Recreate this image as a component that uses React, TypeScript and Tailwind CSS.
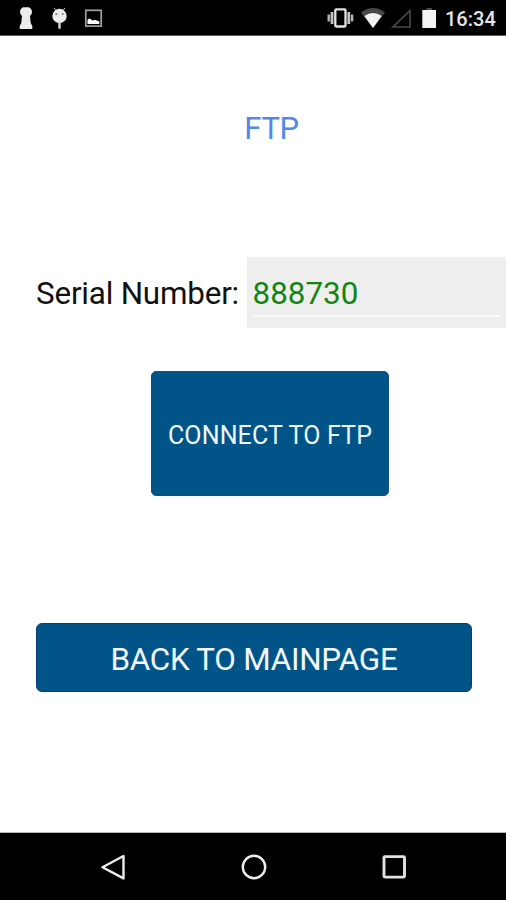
function StatusIconsLeft() {
  return (
    <svg width="120" height="35" viewBox="0 0 120 35" className="block">
      <path d="M23 7.300h6q3 1.700 3 5 0 2.200-2 3.700l.7 7 1.600 3V29H19.700v-3l1.600-3 .7-7q-2-1.500-2-3.700 0-3.300 3-5z" fill="#ececec" />
      <path d="M54 8l2.500 3M65 8l-2.500 3" stroke="#ccc" strokeWidth="1" />
      <circle cx="59.500" cy="16" r="7.200" fill="#ececec" />
      <path d="M58.300 22h2.400v6.200q-1.200 1.600-2.400 0z" fill="#d8d8d8" />
      <circle cx="56.300" cy="14" r="1" fill="#777" />
      <circle cx="62.700" cy="14" r="1" fill="#777" />
      <rect x="85.800" y="10.300" width="15.400" height="15.800" fill="none" stroke="#a0a0a0" strokeWidth="1.700" />
      <path d="M87.500 24v-4.200l2-1.300 3 2 2.500-.8 4.300 1.800V24z" fill="#fff" />
    </svg>
  );
}

function StatusIconsRight() {
  return (
    <svg width="130" height="35" viewBox="310 0 130 35" className="block">
      <rect x="335.300" y="9.300" width="10.200" height="17.200" rx="1" fill="none" stroke="#e2e2e2" strokeWidth="2.300" />
      <path d="M332 12v12M348.800 12v12" stroke="#c4c4c4" strokeWidth="2.800" />
      <path d="M328.700 14.500v7M352.100 14.500v7" stroke="#b5b5b5" strokeWidth="2.400" />
      <path d="M361 12.500q12-8.800 24 0L373 28z" fill="#484848" />
      <path d="M364.300 16q8.700-6 17.400 0L373 28z" fill="#f2f2f2" />
      <path d="M410 10.500V27h-17z" fill="none" stroke="#474747" strokeWidth="1.700" />
      <path d="M426.500 8h5.500v3h-5.500z" fill="#484848" />
      <rect x="422.300" y="10" width="13.700" height="18" fill="#f4f4f4" />
    </svg>
  );
}

function StatusBar() {
  return (
    <header className="flex h-[36px] shrink-0 items-start border-b border-[#5c5c5c] bg-black">
      <StatusIconsLeft />
      <div className="ml-auto flex">
        <StatusIconsRight />
        <span className="w-[66px] pl-[5px] pt-[1px] text-[20px] font-medium leading-[36px] text-[#e4e4e4]">16:34</span>
      </div>
    </header>
  );
}

function NavigationBar() {
  return (
    <nav className="flex h-[68px] shrink-0 items-center justify-between border-t border-[#b5b5b5] bg-black pl-[100px] pr-[99px]">
      <button type="button" aria-label="Back">
        <svg width="26" height="28" viewBox="0 0 26 28" className="block">
          <path d="M23.500 3v22.400L2.500 14.200z" fill="none" stroke="#ededed" strokeWidth="2.400" strokeLinejoin="round" />
        </svg>
      </button>
      <button type="button" aria-label="Home">
        <svg width="26" height="28" viewBox="0 0 26 28" className="block">
          <circle cx="13" cy="14" r="11.200" fill="none" stroke="#ededed" strokeWidth="2.400" />
        </svg>
      </button>
      <button type="button" aria-label="Recent apps">
        <svg width="26" height="28" viewBox="0 0 26 28" className="block">
          <rect x="3" y="3.600" width="20.500" height="20.500" rx="1" fill="none" stroke="#e2e2e2" strokeWidth="2.900" />
        </svg>
      </button>
    </nav>
  );
}

export default function App() {
  return (
    <div className="flex h-[900px] w-[506px] flex-col overflow-hidden bg-white font-['Roboto',sans-serif]">
      <StatusBar />
      <main className="flex grow flex-col">
        <h1 className="mt-[73px] h-[40px] pl-[37px] text-center text-[31px] font-normal leading-[40px] tracking-[-0.4px] text-[#5289e8]">FTP</h1>
        <div className="mt-[108px] flex h-[71px] items-stretch pl-[36px]">
          <label className="w-[211px] whitespace-nowrap text-[31.400px] leading-[74px] tracking-[-0.2px] text-[#111]">Serial Number:</label>
          <div className="flex grow flex-col bg-[#eee] pl-[5.500px] pr-[6px]">
            <div className="h-[60px] border-b-2 border-[#f9f9f9] text-[31.400px] leading-[74px] text-[#128512]">888730</div>
          </div>
        </div>
        <button type="button" className="ml-[151px] mt-[43px] h-[125px] w-[238px] whitespace-nowrap rounded-[5px] border border-[#164f88] bg-[#005488] pt-[4px] text-[25px] tracking-[0.15px] text-[#f2f7ff]">
          CONNECT TO FTP
        </button>
        <button type="button" className="ml-[36px] mt-[127px] h-[69px] w-[436px] whitespace-nowrap rounded-[6px] border border-[#0c3a79] bg-[#005488] pt-[5px] text-[31.400px] tracking-[-0.25px] text-[#f2f7ff]">
          BACK TO MAINPAGE
        </button>
      </main>
      <NavigationBar />
    </div>
  );
}
